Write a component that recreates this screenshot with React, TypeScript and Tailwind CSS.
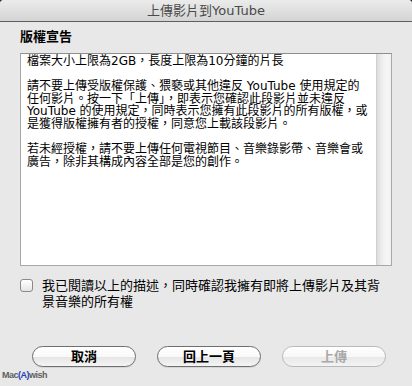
const cjk = "font-['DejaVu_Sans','Noto_Sans_CJK_TC',sans-serif]";

const noticeLines = [
  "檔案大小上限為2GB，長度上限為10分鐘的片長",
  "",
  "請不要上傳受版權保護、猥褻或其他違反 YouTube 使用規定的",
  "任何影片。按一下「上傳」，即表示您確認此段影片並未違反",
  "YouTube 的使用規定，同時表示您擁有此段影片的所有版權，或",
  "是獲得版權擁有者的授權，同意您上載該段影片。",
  "",
  "若未經授權，請不要上傳任何電視節目、音樂錄影帶、音樂會或",
  "廣告，除非其構成內容全部是您的創作。",
];

function AquaButton({ label, disabled }: { label: string; disabled?: boolean }) {
  return (
    <button
      className={
        disabled
          ? "flex h-[21px] w-[104px] items-center justify-center rounded-full border border-[#b9b9b9] bg-[linear-gradient(180deg,#ffffff_0%,#f7f7f7_50%,#e9e9e9_55%,#f3f3f3_100%)] text-[13px] font-bold text-[#a9a9a9]"
          : "flex h-[21px] w-[104px] items-center justify-center rounded-full border border-[#6f6f6f] bg-[linear-gradient(180deg,#ffffff_0%,#f9f9f9_50%,#e6e6e6_55%,#f4f4f4_100%)] text-[13px] font-bold text-black shadow-[0_1px_0_rgba(0,0,0,0.08)]"
      }
    >
      {label}
    </button>
  );
}

export default function App() {
  return (
    <div className={`h-[386px] w-[412px] overflow-hidden bg-[#2a2a2a] ${cjk}`}>
      <div className="flex h-full flex-col rounded-t-[4px] bg-[#e8e8e8]">
        {/* title bar */}
        <div className="flex h-[22px] items-center justify-center rounded-t-[4px] border-b border-[#5f5f5f] bg-[linear-gradient(180deg,#ebebeb_0%,#d4d4d4_100%)] text-[13px] leading-none text-[#4a4a4a]">
          上傳影片到YouTube
        </div>

        <div className="flex flex-1 flex-col px-[20px]">
          <div className="mt-[7px] text-[13px] font-bold leading-[16px] text-black">版權宣告</div>

          <div className="mt-[8px] flex h-[213px] border border-[#a8a8a8] border-t-[#8e8e8e] bg-white">
            <div className="flex-1 pl-[6px] pt-[1px] text-[12px] leading-[12.6px] text-black">
              {noticeLines.map((line, i) => (
                <div key={i} className="h-[12.6px] whitespace-nowrap">
                  {line}
                </div>
              ))}
            </div>
            <div className="w-[15px] border-l border-[#d0d0d0] bg-[linear-gradient(90deg,#dcdcdc_0%,#eeeeee_35%,#f6f6f6_70%,#f2f2f2_100%)]" />
          </div>

          <div className="mt-[12px] flex items-start gap-[9px]">
            <div className="mt-[1px] h-[13px] w-[13px] shrink-0 rounded-[3px] border border-[#8a8a8a] bg-[linear-gradient(180deg,#ffffff_0%,#f1f1f1_60%,#e4e4e4_100%)]" />
            <div className="text-[13px] leading-[16px] text-black">
              <div className="whitespace-nowrap">我已閱讀以上的描述，同時確認我擁有即將上傳影片及其背</div>
              <div className="whitespace-nowrap">景音樂的所有權</div>
            </div>
          </div>

          <div className="mt-[36px] flex gap-[21px] pl-[12px]">
            <AquaButton label="取消" />
            <AquaButton label="回上一頁" />
            <AquaButton label="上傳" disabled />
          </div>
        </div>

        <div className="mb-[6px] ml-[2px] font-['Liberation_Sans',sans-serif] text-[9px] font-bold leading-[10px] tracking-[-0.5px] text-[#5f5f5f]">
          Mac<span className="text-[#1f3fb8]">(A)</span>wish
        </div>
      </div>
    </div>
  );
}
